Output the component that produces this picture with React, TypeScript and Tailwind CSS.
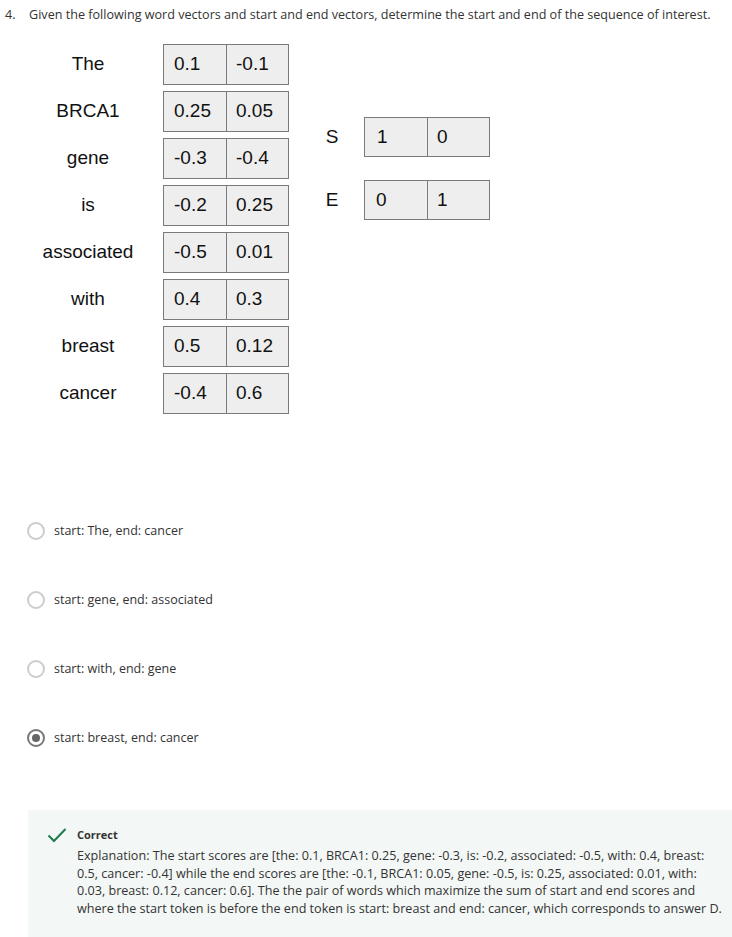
import React from "react";

const rows: [string, string, string][] = [
  ["The", "0.1", "-0.1"],
  ["BRCA1", "0.25", "0.05"],
  ["gene", "-0.3", "-0.4"],
  ["is", "-0.2", "0.25"],
  ["associated", "-0.5", "0.01"],
  ["with", "0.4", "0.3"],
  ["breast", "0.5", "0.12"],
  ["cancer", "-0.4", "0.6"],
];

function Box({ a, b, pa = "pl-[10px]", h = "h-[41px]" }: { a: string; b: string; pa?: string; h?: string }) {
  return (
    <div className={`flex ${h} w-[126px] border border-[#7a7a7a] bg-[#eeeeee]`}>
      <div className={`flex w-[63px] items-center border-r border-[#7a7a7a] ${pa}`}>{a}</div>
      <div className="flex flex-1 items-center pl-[9px]">{b}</div>
    </div>
  );
}

const options = [
  "start: The, end: cancer",
  "start: gene, end: associated",
  "start: with, end: gene",
  "start: breast, end: cancer",
];

export default function App() {
  return (
    <div className="relative w-[732px] h-[937px] overflow-hidden bg-white text-[#333] [font-family:'Open_Sans',sans-serif]">
      <div className="flex pt-[6px] text-[12.6px] leading-[17px]">
        <span className="w-[29px] pl-[5px]">4.</span>
        <span>Given the following word vectors and start and end vectors, determine the start and end of the sequence of interest.</span>
      </div>

      <div className="mt-[21px] flex text-[19px] text-[#111] [font-family:'Liberation_Sans',Arial,sans-serif]">
        <div className="flex flex-col gap-[6px] pl-[13px]">
          {rows.map(([w, a, b]) => (
            <div key={w} className="flex items-center">
              <div className="w-[150px] text-center">{w}</div>
              <Box a={a} b={b} />
            </div>
          ))}
        </div>
        <div className="ml-[33px] mt-[73px] flex flex-col gap-[23px]">
          <div className="flex items-center">
            <div className="w-[20px] text-center">S</div>
            <div className="ml-[22px]">
              <Box a="1" b="0" pa="pl-[12px]" h="h-[40px]" />
            </div>
          </div>
          <div className="flex items-center">
            <div className="w-[20px] text-center">E</div>
            <div className="ml-[22px]">
              <Box a="0" b="1" pa="pl-[11px]" h="h-[40px]" />
            </div>
          </div>
        </div>
      </div>

      <div className="mt-[108px] flex flex-col gap-[51px] pl-[27px] text-[12.5px]">
        {options.map((o, i) => (
          <div key={o} className="flex h-[18px] items-center">
            {i === 3 ? (
              <div className="flex h-[18px] w-[18px] items-center justify-center rounded-full border-2 border-[#777]">
                <div className="h-[8px] w-[8px] rounded-full bg-[#666]" />
              </div>
            ) : (
              <div className="h-[18px] w-[18px] rounded-full border-2 border-[#cccccc]" />
            )}
            <span className="ml-[9px]">{o}</span>
          </div>
        ))}
      </div>

      <div className="absolute left-[28px] top-[810px] h-[140px] w-[720px] bg-[#f3f8f6] pl-[19px] pt-[16px]">
        <div className="flex">
          <svg width="20" height="16" viewBox="0 0 20 16" className="mt-[1px] shrink-0">
            <path d="M1.5 8.5 L7 14 L18.5 2" fill="none" stroke="#1f7a4d" strokeWidth="2" />
          </svg>
          <div className="ml-[10px] w-[650px] text-[12.6px]">
            <div className="font-bold text-[11px] leading-[18px]">Correct</div>
            <div className="mt-[3px] leading-[17.7px] text-[#333]">
              Explanation: The start scores are [the: 0.1, BRCA1: 0.25, gene: -0.3, is: -0.2, associated: -0.5, with: 0.4, breast: 0.5, cancer: -0.4] while the end scores are [the: -0.1, BRCA1: 0.05, gene: -0.5, is: 0.25, associated: 0.01, with: 0.03, breast: 0.12, cancer: 0.6]. The the pair of words which maximize the sum of start and end scores and where the start token is before the end token is start: breast and end: cancer, which corresponds to answer D.
            </div>
          </div>
        </div>
      </div>
    </div>
  );
}
